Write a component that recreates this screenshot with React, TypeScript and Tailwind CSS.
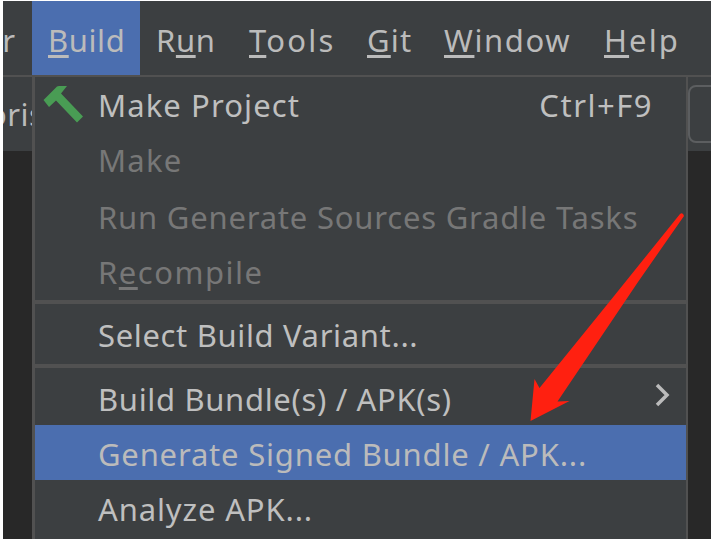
import type { ReactNode } from 'react';

const Mnemonic = ({ children }: { children: ReactNode }) => (
  <span className="underline decoration-[3px] underline-offset-[3px] [text-decoration-skip-ink:none]">{children}</span>
);

const Row = ({ children, tone = 'text-[#bfbfbf]', className = '' }: { children: ReactNode; tone?: string; className?: string }) => (
  <div className={`relative flex h-[55px] shrink-0 items-center justify-between pt-[2px] pr-[33px] pl-[63px] ${tone} ${className}`}>
    {children}
  </div>
);

const Separator = ({ className }: { className: string }) => (
  <div className={`flex shrink-0 items-center ${className}`}>
    <div className="h-[4px] w-full bg-[#515151]" />
  </div>
);

export default function App() {
  return (
    <div className="relative h-[539px] w-[715px] overflow-hidden bg-white pt-px pr-[4px] pl-[3px] font-['Noto_Sans',sans-serif] text-[31px] leading-[50px] whitespace-nowrap">
      <div className="flex h-full flex-col overflow-hidden bg-[#3c3f41]">
        <nav className="flex h-[74px] shrink-0 text-[#bbbbbb]">
          <div className="flex w-[29px] items-center justify-end pt-[3px] pr-[17px]"><span>r</span></div>
          <div className="flex w-[108px] items-center bg-[#4b6eaf] pt-[3px] pl-[16px]"><span className="tracking-[0.6px]"><Mnemonic>B</Mnemonic>uild</span></div>
          <div className="flex w-[91px] items-center pt-[3px] pl-[16px]"><span className="tracking-[0.6px]">R<Mnemonic>u</Mnemonic>n</span></div>
          <div className="flex w-[118px] items-center pt-[3px] pl-[18px]"><span className="tracking-[2.2px]"><Mnemonic>T</Mnemonic>ools</span></div>
          <div className="flex w-[77px] items-center pt-[3px] pl-[18px]"><span className="tracking-[1.2px]"><Mnemonic>G</Mnemonic>it</span></div>
          <div className="flex w-[161px] items-center pt-[3px] pl-[18px]"><span className="tracking-[1.6px]"><Mnemonic>W</Mnemonic>indow</span></div>
          <div className="flex items-center pt-[3px] pl-[17px]"><span className="tracking-[2.1px]"><Mnemonic>H</Mnemonic>elp</span></div>
        </nav>
        <div className="h-[2px] shrink-0 bg-[#515151]" />
        <div className="flex min-h-0 flex-1">
          <aside className="flex w-[29px] shrink-0 flex-col overflow-hidden bg-[#282828]">
            <div className="flex h-[74px] items-center overflow-hidden bg-[#3c3f41] text-[#bbbbbb]"><span className="-ml-[15px] tracking-[0.5px]">oris</span></div>
          </aside>
          <main className="flex w-[656px] shrink-0 flex-col border-r-2 border-l-3 border-[#515151]">
            <Row className="-mt-px">
              <svg className="absolute top-[9px] left-[8px]" width="42" height="40" viewBox="0 0 42 40">
                <path d="M0.500 15 L14 1.500 Q15 1 16 1 H24 L18 8.500 L40 31.500 L34 37.500 L13 15.500 L6 22 Z" fill="#499c54" />
              </svg>
              <span className="tracking-[1.1px]">Make Project</span><span className="tracking-[1.5px]">Ctrl+F9</span>
            </Row>
            <Row tone="text-[#777777]"><span className="tracking-[1.2px]">Make</span></Row>
            <Row tone="text-[#777777]" className="mt-[2px]"><span className="tracking-[0.79px]">Run Generate Sources Gradle Tasks</span></Row>
            <Row tone="text-[#777777]"><span className="tracking-[1.5px]">R<Mnemonic>e</Mnemonic>compile</span></Row>
            <Separator className="h-[8px]" />
            <Row><span className="tracking-[0.65px]">Select Build Variant...</span></Row>
            <Separator className="h-[9px]" />
            <Row>
              <span className="tracking-[0.67px]">Build Bundle(s) / APK(s)</span>
              <svg className="mr-[-20px] -mt-[7px]" width="18" height="26" viewBox="0 0 18 26">
                <path d="M2 3 L12 13 L2 23" fill="none" stroke="#bbbbbb" strokeWidth="3.5" />
              </svg>
            </Row>
            <Row className="bg-[#4b6eaf]" tone="text-[#bbbbbb]"><span className="tracking-[0.8px]">Generate Signed Bundle / APK...</span></Row>
            <Row><span className="tracking-[0.86px]">Analyze APK...</span></Row>
          </main>
          <aside className="flex min-w-0 flex-1 flex-col bg-[#282828]">
            <div className="h-[74px] overflow-hidden bg-[#3c3f41] pt-[8px]">
              <div className="h-[58px] w-[60px] rounded-[8px] border-2 border-[#5c5e60]" />
            </div>
          </aside>
        </div>
      </div>
      <svg className="absolute top-[205px] left-[520px]" width="175" height="225" viewBox="520 205 175 225">
        <path d="M680 214 Q683 212 684 216 L638 282 L557.500 401.500 L569.500 401 L530.500 421 L534.500 379 L539.500 388 L610 301 Z" fill="#ff2010" />
      </svg>
    </div>
  );
}
